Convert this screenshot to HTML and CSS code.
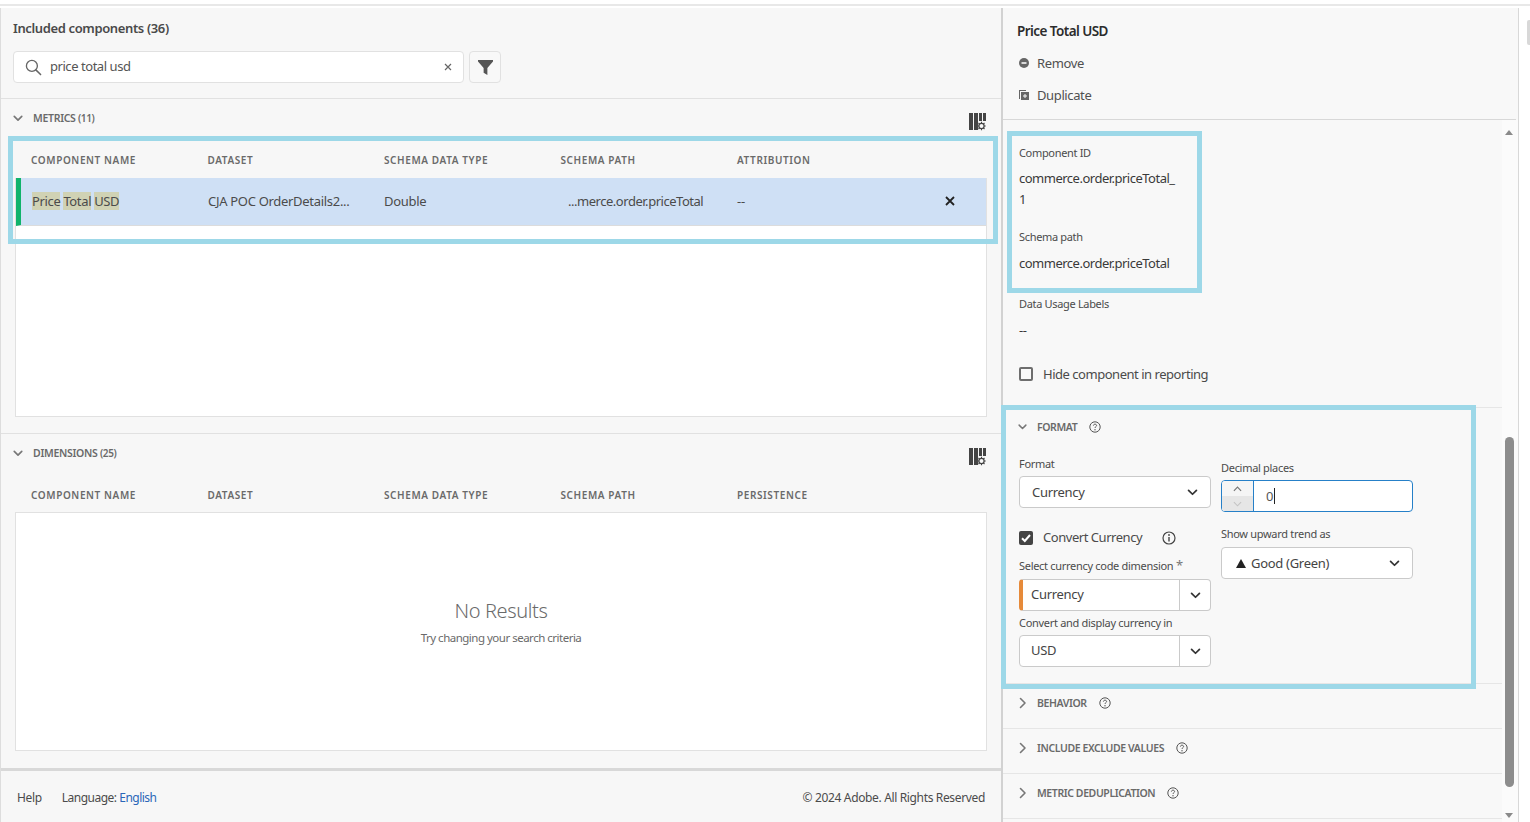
FILE: index.html
```html
<!DOCTYPE html>
<html lang="en">
<head>
<meta charset="utf-8">
<title>Included components</title>
<link rel="stylesheet" href="styles.css">
</head>
<body>
<svg class="defs" width="0" height="0" aria-hidden="true">
  <symbol id="down" viewBox="0 0 12 8"><path d="M1.5 1.5 6 6l4.5-4.5" fill="none" stroke="currentColor" stroke-width="2" stroke-linecap="round" stroke-linejoin="round"/></symbol>
  <symbol id="right" viewBox="0 0 8 12"><path d="M1.5 1.5 6 6l-4.5 4.5" fill="none" stroke="currentColor" stroke-width="1.6" stroke-linecap="round" stroke-linejoin="round"/></symbol>
  <symbol id="help" viewBox="0 0 12 12"><circle cx="6" cy="6" r="5.2" fill="none" stroke="currentColor" stroke-width="1"/><path d="M4.4 4.6C4.5 3.6 5.2 3.2 6 3.2c.9 0 1.6.5 1.6 1.3 0 1.2-1.6 1.2-1.6 2.5" fill="none" stroke="currentColor"/><circle cx="6" cy="8.7" r=".7" fill="currentColor"/></symbol>
  <symbol id="cols" viewBox="0 0 18 18"><path d="M0 0h4v17H0zM5 0h4v17H5zM10 0h3v8h-3zM14 0h3v8h-3z" fill="currentColor"/><circle cx="12.5" cy="13" r="3.6" fill="#f7f7f7"/><circle cx="12.5" cy="13" r="2.6" fill="none" stroke="currentColor" stroke-width="1.2"/><path d="M12.5 8.8v1.6M12.5 15.6v1.6M8.3 13h1.6M15.1 13h1.6M9.5 10l1.1 1.1M14.4 14.9l1.1 1.1M15.5 10l-1.1 1.1M10.6 14.9 9.5 16" stroke="currentColor" stroke-width="1.1"/></symbol>
</svg>

<div class="top-bar"></div>
<main class="app">
  <section class="left">
    <header class="left-head">
      <h1 class="title">Included components (36)</h1>
      <div class="search-row">
        <div class="search">
          <svg class="search-icon" viewBox="0 0 18 18"><circle cx="7.3" cy="7.3" r="5.8" fill="none" stroke="currentColor" stroke-width="1.4"/><path d="m11.5 11.5 5 5" stroke="currentColor" stroke-width="1.6" stroke-linecap="round"/></svg>
          <span class="search-text">price total usd</span>
          <svg class="clear-icon" viewBox="0 0 8 8"><path d="m1 1 6 6M7 1 1 7" stroke="currentColor" stroke-width="1.2"/></svg>
        </div>
        <button class="filter" type="button" aria-label="Filter"><svg viewBox="0 0 16 16"><path d="M0 0h16v1.6L10 8.5V16L6 13.5V8.5L0 1.6z" fill="currentColor"/></svg></button>
      </div>
    </header>

    <section class="group metrics">
      <div class="group-head">
        <svg class="chev"><use href="#down"/></svg>
        <span class="group-name">METRICS <small>(11)</small></span>
        <svg class="cols"><use href="#cols"/></svg>
      </div>
      <div class="cols-row">
        <span>COMPONENT NAME</span><span>DATASET</span><span>SCHEMA DATA TYPE</span><span>SCHEMA PATH</span><span>ATTRIBUTION</span>
      </div>
      <div class="table-box">
        <div class="row">
          <span class="cell name"><mark>Price</mark> <mark>Total</mark> <mark>USD</mark></span>
          <span class="cell">CJA POC OrderDetails2...</span>
          <span class="cell">Double</span>
          <span class="cell path">...merce.order.priceTotal</span>
          <span class="cell dash">--</span>
          <svg class="row-x" viewBox="0 0 10 10"><path d="m1 1 8 8M9 1 1 9" stroke="currentColor" stroke-width="1.8"/></svg>
        </div>
      </div>
    </section>

    <section class="group dimensions">
      <div class="group-head">
        <svg class="chev"><use href="#down"/></svg>
        <span class="group-name">DIMENSIONS <small>(25)</small></span>
        <svg class="cols"><use href="#cols"/></svg>
      </div>
      <div class="cols-row">
        <span>COMPONENT NAME</span><span>DATASET</span><span>SCHEMA DATA TYPE</span><span>SCHEMA PATH</span><span>PERSISTENCE</span>
      </div>
      <div class="table-box empty">
        <p class="no-results">No Results</p>
        <p class="no-hint">Try changing your search criteria</p>
      </div>
    </section>

    <footer class="footer">
      <span class="help-link">Help</span>
      <span class="language">Language: <a class="lang" href="#">English</a></span>
      <span class="copy">© 2024 Adobe. All Rights Reserved</span>
    </footer>
  </section>

  <aside class="right">
    <header class="right-head">
      <h2 class="comp-title">Price Total USD</h2>
      <div class="action">
        <svg viewBox="0 0 10 10"><circle cx="5" cy="5" r="5" fill="currentColor"/><path d="M2.5 5h5" stroke="#f8f8f8" stroke-width="1.6"/></svg>
        <span>Remove</span>
      </div>
      <div class="action">
        <svg viewBox="0 0 10 10"><path d="M0 0h7v1H1v8H0z" fill="currentColor"/><path d="M2 2h8v8H2z" fill="currentColor"/><path d="M6 4v4M4 6h4" stroke="#f8f8f8" stroke-width="1"/></svg>
        <span>Duplicate</span>
      </div>
    </header>
    <div class="scroll-area">
      <div class="scroll-content">
        <div class="info">
          <div class="info-label first">Component ID</div>
          <div class="info-value">commerce.order.priceTotal_<br>1</div>
          <div class="info-label second">Schema path</div>
          <div class="info-value single">commerce.order.priceTotal</div>
          <div class="info-label third">Data Usage Labels</div>
          <div class="info-value dash-val">--</div>
          <label class="hide-check"><span class="box"></span><span>Hide component in reporting</span></label>
        </div>

        <section class="fmt">
          <div class="sec-head open">
            <svg class="sec-down"><use href="#down"/></svg>
            <span class="sec-name">FORMAT</span>
            <svg class="help"><use href="#help"/></svg>
          </div>
          <div class="fmt-cols">
            <div class="fmt-col">
              <div class="fld-label">Format</div>
              <div class="select"><span>Currency</span><svg class="sel-chev"><use href="#down"/></svg></div>
              <div class="convert">
                <span class="box checked"><svg viewBox="0 0 14 14"><path d="m3 7.2 2.8 2.8L11 4" fill="none" stroke="#fff" stroke-width="2"/></svg></span>
                <span class="convert-text">Convert Currency</span>
                <svg class="info-i" viewBox="0 0 14 14"><circle cx="7" cy="7" r="6" fill="none" stroke="currentColor" stroke-width="1.2"/><path d="M7 6v4.4" stroke="currentColor" stroke-width="1.4"/><circle cx="7" cy="4" r=".9" fill="currentColor"/></svg>
              </div>
              <div class="fld-label sel-code">Select currency code dimension <span class="star">*</span></div>
              <div class="combo required"><span class="combo-val">Currency</span><span class="combo-btn"><svg class="sel-chev"><use href="#down"/></svg></span></div>
              <div class="fld-label conv-in">Convert and display currency in</div>
              <div class="combo"><span class="combo-val">USD</span><span class="combo-btn"><svg class="sel-chev"><use href="#down"/></svg></span></div>
            </div>
            <div class="fmt-col second-col">
              <div class="fld-label">Decimal places</div>
              <div class="number">
                <span class="stepper">
                  <span class="step"><svg viewBox="0 0 10 6"><path d="m1 5 4-4 4 4" fill="none" stroke="#777" stroke-width="1.3"/></svg></span>
                  <span class="step off"><svg viewBox="0 0 10 6"><path d="m1 1 4 4 4-4" fill="none" stroke="#c4c4c4" stroke-width="1.2"/></svg></span>
                </span>
                <span class="num-val">0</span>
              </div>
              <div class="fld-label trend">Show upward trend as</div>
              <div class="select trend-sel"><span class="trend-val"><span class="tri"></span>Good (Green)</span><svg class="sel-chev"><use href="#down"/></svg></div>
            </div>
          </div>
        </section>

        <div class="sec-row">
          <svg class="sec-right"><use href="#right"/></svg><span class="sec-name">BEHAVIOR</span><svg class="help"><use href="#help"/></svg>
        </div>
        <div class="sec-row">
          <svg class="sec-right"><use href="#right"/></svg><span class="sec-name">INCLUDE EXCLUDE VALUES</span><svg class="help"><use href="#help"/></svg>
        </div>
        <div class="sec-row">
          <svg class="sec-right"><use href="#right"/></svg><span class="sec-name">METRIC DEDUPLICATION</span><svg class="help"><use href="#help"/></svg>
        </div>
      </div>
      <div class="scrollbar">
        <span class="arrow up"></span>
        <span class="thumb"></span>
        <span class="arrow dn"></span>
      </div>
    </div>
  </aside>
  <div class="outer-scroll"><span class="outer-thumb"></span></div>
</main>

<div class="hl hl-table"></div>
<div class="hl hl-info"></div>
<div class="hl hl-format"></div>
</body>
</html>
```

FILE: styles.css
```css
* { box-sizing: border-box; }
html, body { margin: 0; height: 822px; overflow: hidden; background: #fff; }
body { font-family: "Noto Sans", "Open Sans", sans-serif; font-size: 12.5px; color: #4b4b4b; letter-spacing: -0.3px; position: relative; }
.defs { position: absolute; }
svg { display: block; flex: none; }
p, h1, h2 { margin: 0; }

.top-bar { height: 8px; border-top: 4px solid #fff; border-bottom: 2px solid #fff; background: #e8e8e8; }
.app { display: grid; grid-template-columns: 1003px 516px 11px; height: 814px; }

/* left */
.left { display: flex; flex-direction: column; background: #f7f7f7; border-left: 1px solid #ddd; border-right: 2px solid #d2d2d2; height: 814px; }
.left > * { flex: none; }
.left-head { height: 91px; border-bottom: 1px solid #e1e1e1; padding: 11px 0 0 12px; }
.title { font-size: 13px; font-weight: 600; color: #4a4a4a; line-height: 18px; letter-spacing: -0.37px; }
.search-row { display: flex; gap: 5px; margin-top: 14px; }
.search { width: 451px; height: 32px; background: #fff; border: 1px solid #e1e1e1; border-radius: 4px; display: flex; align-items: center; padding-left: 11px; color: #555; }
.search-icon { width: 17px; height: 17px; color: #666; }
.search-text { margin-left: 8px; flex: 1; font-size: 13px; letter-spacing: -0.45px; padding-bottom: 3px; }
.clear-icon { width: 8px; height: 8px; margin-right: 11px; color: #666; }
.filter { width: 32px; height: 32px; padding: 0; background: #f8f8f8; border: 1px solid #e1e1e1; border-radius: 4px; color: #555; display: flex; align-items: center; justify-content: center; }
.filter svg { width: 15px; height: 17px; }

.group { display: flex; flex-direction: column; padding: 0 14px; }
.metrics { height: 335px; border-bottom: 1px solid #e1e1e1; }
.dimensions { height: 334px; }
.group-head { height: 38px; flex: none; display: flex; align-items: center; color: #6e6e6e; }
.chev { width: 10px; height: 7px; margin-left: -2px; color: #777; }
.group-name { margin-left: 10px; font-size: 10.5px; font-weight: 600; flex: 1; letter-spacing: -0.3px; color: #6a6a6a; }
.group-name small { font-size: 10px; letter-spacing: -0.4px; }
.cols { width: 18px; height: 18px; color: #444; margin-right: 0; margin-top: 7px; }
.cols-row { height: 41px; flex: none; padding-top: 4px; display: grid; grid-template-columns: repeat(5, 176.5px); align-items: center; padding-left: 16px; font-size: 10px; font-weight: 600; letter-spacing: 0.6px; color: #6a6a6a; }
.table-box { flex: 1; background: #fff; border: 1px solid #e1e1e1; margin-bottom: 16px; }
.dimensions .cols-row { height: 40px; padding-top: 5px; }
.dimensions .table-box { margin-bottom: 17px; }
.row { height: 48px; padding-bottom: 2px; border-bottom: 1px solid #dcdcdc; background: #cfe0f5; border-left: 5px solid #0fb36b; display: grid; grid-template-columns: 176px 176px 184px 169px 1fr auto; align-items: center; padding-right: 31px; font-size: 13px; color: #4b4b4b; position: relative; margin-top: -1px; }
.cell { padding-left: 11px; white-space: nowrap; }
.cell.name { letter-spacing: -0.36px; }
.row .path { padding-left: 0; letter-spacing: -0.47px; margin-left: 11px; }
.row mark { background: #d0d2b4; color: inherit; }
.row-x { width: 10px; height: 10px; color: #222; }
.empty { display: flex; flex-direction: column; align-items: center; padding-top: 85px; }
.no-results { font-size: 20px; line-height: 26px; color: #6a6a6a; font-weight: 300; letter-spacing: -0.4px; }
.no-hint { font-size: 11.5px; margin-top: 5px; line-height: 18px; color: #6a6a6a; letter-spacing: -0.5px; }
.footer { height: 54px; border-top: 3px solid #d8d8d8; display: flex; align-items: center; padding: 1px 16px 0; gap: 20px; font-size: 12px; color: #4b4b4b; letter-spacing: -0.35px; }
.language { letter-spacing: -0.5px; }
.lang { color: #2a66b8; text-decoration: none; }
.copy { margin-left: auto; }

/* right */
.right { display: flex; flex-direction: column; background: #f8f8f8; border-right: 1px solid #d8d8d8; height: 814px; }
.right-head { height: 112px; flex: none; border-bottom: 1px solid #d8d8d8; padding: 13px 0 0 14px; margin-right: 2px; }
.comp-title { font-size: 13.5px; font-weight: 600; line-height: 20px; color: #2c2c2c; letter-spacing: -0.56px; }
.action { display: flex; align-items: center; height: 20px; margin-top: 12px; color: #505050; font-size: 13px; padding-left: 2px; letter-spacing: -0.38px; }
.action svg { width: 10px; height: 10px; color: #666; margin-right: 8px; }
.scroll-area { flex: 1; display: flex; min-height: 0; }
.scroll-content { width: 499px; overflow: hidden; }
.info { height: 288px; padding: 25px 0 0 16px; border-bottom: 1px solid #e6e6e6; }
.info-label { font-size: 11px; line-height: 16px; color: #4b4b4b; letter-spacing: -0.33px; }
.info-value { font-size: 13px; line-height: 21px; color: #3a3a3a; margin-top: 7px; letter-spacing: -0.5px; }
.info-label.second { margin-top: 19px; }
.info-value.single { margin-top: 8px; }
.info-label.third { margin-top: 22px; }
.dash-val { margin-top: 8px; }
.hide-check { display: flex; align-items: center; gap: 10px; margin-top: 24px; font-size: 13px; color: #4b4b4b; letter-spacing: -0.47px; }
.box { width: 14px; height: 14px; border: 2px solid #6e6e6e; border-radius: 2px; background: #fafafa; flex: none; display: block; }
.box.checked { background: #444; border: 0; }
.box.checked svg { width: 14px; height: 14px; }

.sec-head, .sec-row { display: flex; align-items: center; }
.fmt { height: 276px; padding: 0 0 0 16px; border-bottom: 1px solid #e6e6e6; }
.sec-head { height: 38px; }
.sec-down { width: 9px; height: 6px; margin-right: 10px; color: #777; margin-left: -1px; }
.sec-name { font-size: 10.5px; font-weight: 600; color: #6a6a6a; letter-spacing: -0.4px; }
.help { width: 12px; height: 12px; margin-left: 12px; color: #555; }
.fmt-cols { display: flex; gap: 10px; }
.fmt-col { width: 192px; }
.fld-label { font-size: 11px; line-height: 16px; height: 16px; color: #4b4b4b; }
.fmt-col .fld-label:first-child { margin-top: 10px; }
.select { height: 32px; margin-top: 4px; border: 1px solid #cacaca; border-radius: 4px; background: #fff; display: flex; align-items: center; justify-content: space-between; padding: 0 12px; font-size: 13px; color: #444; }
.sel-chev { width: 11px; height: 7px; color: #333; }
.convert { display: flex; align-items: center; gap: 10px; margin-top: 22px; height: 16px; font-size: 13px; color: #4b4b4b; }
.convert-text { letter-spacing: -0.46px; margin-top: -2px; }
.info-i { width: 14px; height: 14px; margin-left: 10px; color: #444; }
.sel-code { margin-top: 12px; }
.star { color: #777; font-size: 13px; line-height: 1; }
.combo { height: 32px; margin-top: 5px; border: 1px solid #cacaca; border-radius: 4px; background: #fff; display: flex; align-items: center; font-size: 13px; color: #444; overflow: hidden; }
.combo.required { border-left: 4px solid #e68a3a; }
.combo-val { flex: 1; padding: 0 0 2px 11px; }
.combo.required .combo-val { padding-left: 8px; }
.combo-btn { width: 31px; height: 100%; border-left: 1px solid #cacaca; display: flex; align-items: center; justify-content: center; }
.conv-in { margin-top: 4px; }
.conv-in + .combo { margin-top: 4px; }
.second-col .fld-label:first-child { margin-top: 14px; }
.number { height: 32px; margin-top: 4px; border: 1px solid #2680c8; border-radius: 4px; background: #fff; display: flex; overflow: hidden; }
.stepper { width: 32px; display: flex; flex-direction: column; border-right: 1px solid #2680c8; background: #f5f5f5; }
.step { height: 15px; display: flex; align-items: center; justify-content: center; }
.step.off { flex: 1; background: #e6e6e6; }
.step svg { width: 9px; height: 6px; }
.num-val { padding-left: 12px; line-height: 30px; font-size: 13px; color: #555; position: relative; }
.num-val::after { content: ""; display: inline-block; width: 1px; height: 16px; background: #222; vertical-align: -3px; margin-left: 1px; }
.trend { margin-top: 14px; }
.trend-sel { margin-top: 5px; padding-left: 14px; }
.trend-val { display: flex; align-items: center; }
.tri { width: 0; height: 0; border-left: 5px solid transparent; border-right: 5px solid transparent; border-bottom: 9px solid #222; margin-right: 5px; }
.sec-row { height: 45px; padding: 0 0 6px 16px; border-bottom: 1px solid #e6e6e6; }
.sec-right { width: 8px; height: 12px; margin-right: 10px; color: #777; }
.scrollbar { width: 16px; position: relative; background: #fbfbfb; }
.thumb { position: absolute; left: 3px; top: 317px; width: 9px; height: 350px; background: #8d8d8d; border-radius: 5px; }
.arrow { position: absolute; left: 3px; width: 0; height: 0; border-left: 4px solid transparent; border-right: 4px solid transparent; }
.arrow.up { top: 10px; border-bottom: 5px solid #8a8a8a; }
.arrow.dn { top: 693px; border-top: 5px solid #8a8a8a; }
.outer-scroll { background: #fff; position: relative; }
.outer-thumb { position: absolute; right: 0; top: 12px; width: 3px; height: 25px; background: #d8d8d8; border-radius: 2px 0 0 2px; }

/* annotation rectangles drawn over the page */
.hl { position: absolute; border: 5px solid #9dd8e8; pointer-events: none; }
.hl-table { left: 8px; top: 136px; width: 990px; height: 108px; }
.hl-info { left: 1007px; top: 131px; width: 195px; height: 162px; }
.hl-format { left: 1001px; top: 405px; width: 475px; height: 284px; }
```
